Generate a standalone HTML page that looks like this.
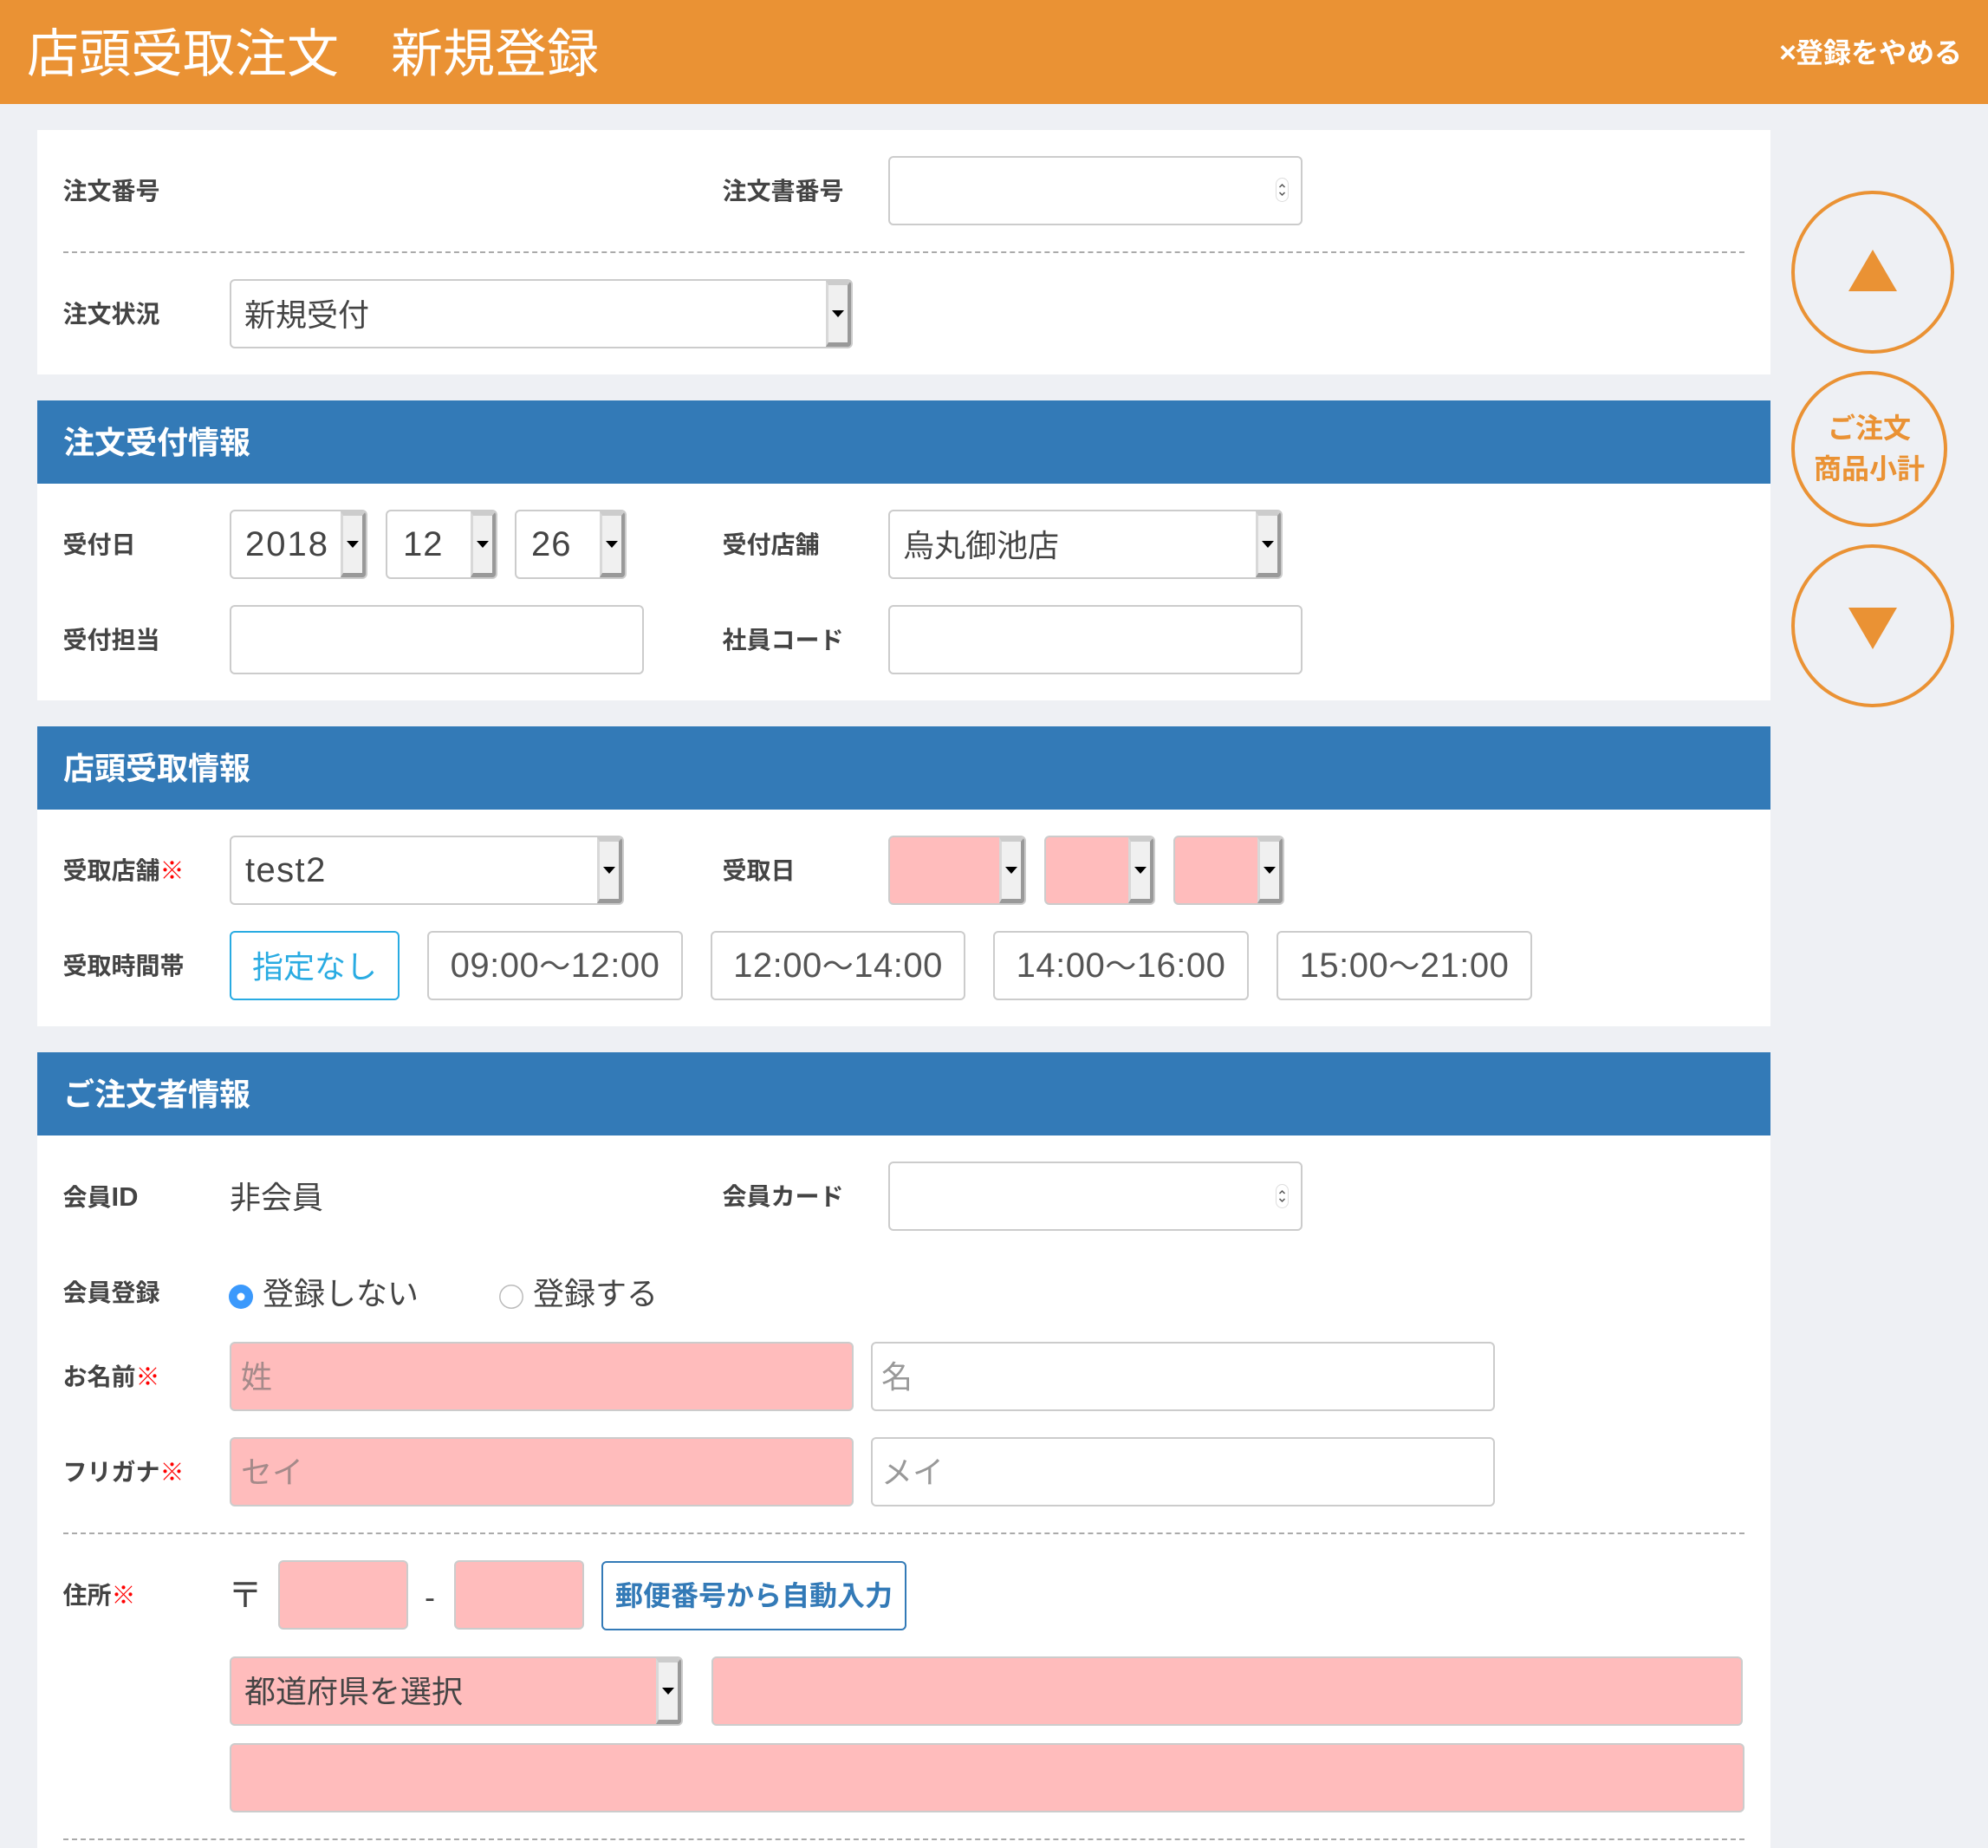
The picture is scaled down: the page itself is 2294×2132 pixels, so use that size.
<!DOCTYPE html>
<html lang="ja">
<head>
<meta charset="utf-8">
<title>店頭受取注文 新規登録</title>
<style>
*{box-sizing:border-box}
html,body{margin:0;padding:0}
body{width:2294px;height:2132px;position:relative;overflow:hidden;background:#eef0f4;color:#444;font-family:"Liberation Sans","Noto Sans CJK JP",sans-serif}
.a{position:absolute}
.head{left:0;top:0;width:2294px;height:120px;background:#ea9234}
.title{left:31px;top:-2px;height:120px;line-height:120px;font-size:60px;color:#fff;white-space:pre;font-family:"Noto Sans CJK JP",sans-serif;font-weight:400}
.quit{right:30px;top:1px;height:120px;line-height:120px;font-size:32px;font-weight:700;color:#fff;white-space:pre}
.quit span{font-size:34px;margin-right:-1px}
.panel{left:43px;width:2000px;background:#fff}
.sec{left:43px;width:2000px;height:96px;background:#337ab7;color:#fff;font-size:36px;font-weight:700;line-height:98px;padding-left:30px}
.l{height:80px;line-height:82px;font-size:28px;font-weight:700;color:#444;white-space:pre;margin-left:-.5px}
.l i{font-style:normal;color:#f00}
.box{height:80px;border:2px solid #ccc;border-radius:6px;background:#fff;font-size:36px;line-height:79px;color:#444;white-space:pre;overflow:hidden}
.pink{background:#ffbcbc}
.sel{padding-left:15px}
.sel b{position:absolute;right:0;top:0;bottom:0;width:29px;background:#f0f0f0;border-style:solid;border-width:5px 4px 5px 3px;border-color:#ccc #999 #999 #d8d8d8}
.sel b:after{content:"";position:absolute;left:50%;top:50%;margin:-4px 0 0 -7px;border-style:solid;border-width:8px 7px 0;border-color:#000 transparent transparent}
.ph{padding-left:11px;color:#999;line-height:78px}
.pink.ph{color:#a58a8a}
.num{font-size:40px;line-height:77px;letter-spacing:2px;padding-left:16px}
.btn{height:80px;border:2px solid #ccc;border-radius:6px;background:#fff;font-size:40px;line-height:77px;text-align:center;color:#555;white-space:pre;letter-spacing:.5px}
.btn span{font-size:36px}
.t{height:80px;line-height:83px;font-size:36px;color:#444;white-space:pre}
.hr{left:73px;width:1940px;height:0;border-top:2px dashed #aaa}
.c{border:4px solid #ea9234;border-radius:50%}
.sum{text-align:center;font-size:32px;font-weight:700;color:#ea9234;line-height:47px;white-space:pre}
</style>
</head>
<body>
<div class="a head"></div>
<div class="a title">店頭受取注文　新規登録</div>
<div class="a quit"><span>×</span>登録をやめる</div>

<!-- panels -->
<div class="a panel" style="top:150px;height:282px"></div>
<div class="a panel" style="top:462px;height:346px"></div>
<div class="a panel" style="top:838px;height:346px"></div>
<div class="a panel" style="top:1214px;height:918px"></div>
<div class="a sec" style="top:462px">注文受付情報</div>
<div class="a sec" style="top:838px">店頭受取情報</div>
<div class="a sec" style="top:1214px">ご注文者情報</div>

<!-- section 1 -->
<div class="a l" style="left:73px;top:180px">注文番号</div>
<div class="a l" style="left:834px;top:180px">注文書番号</div>
<div class="a box" style="left:1025px;top:180px;width:478px"></div>
<svg class="a" style="left:1472px;top:205px" width="15" height="28" viewBox="0 0 15 28"><rect x="0.5" y="0.5" width="14" height="27" rx="7" fill="#fff" stroke="#ddd"/><path d="M4.5 11 L7.5 8 L10.5 11 M4.5 17 L7.5 20 L10.5 17" fill="none" stroke="#555" stroke-width="1.5"/></svg>
<div class="a hr" style="top:290px"></div>
<div class="a l" style="left:73px;top:322px">注文状況</div>
<div class="a box sel" style="left:265px;top:322px;width:719px">新規受付<b></b></div>

<!-- section 2 -->
<div class="a l" style="left:73px;top:588px">受付日</div>
<div class="a box sel num" style="left:265px;top:588px;width:159px">2018<b></b></div>
<div class="a box sel num" style="left:445px;top:588px;width:129px;padding-left:18px;letter-spacing:1px">12<b></b></div>
<div class="a box sel num" style="left:594px;top:588px;width:129px;padding-left:17px;letter-spacing:1px">26<b></b></div>
<div class="a l" style="left:834px;top:588px">受付店舗</div>
<div class="a box sel" style="left:1025px;top:588px;width:455px">烏丸御池店<b></b></div>
<div class="a l" style="left:73px;top:698px">受付担当</div>
<div class="a box" style="left:265px;top:698px;width:478px"></div>
<div class="a l" style="left:834px;top:698px">社員コード</div>
<div class="a box" style="left:1025px;top:698px;width:478px"></div>

<!-- section 3 -->
<div class="a l" style="left:73px;top:964px">受取店舗<i>※</i></div>
<div class="a box sel num" style="left:265px;top:964px;width:455px;letter-spacing:1.4px">test2<b></b></div>
<div class="a l" style="left:834px;top:964px">受取日</div>
<div class="a box sel pink" style="left:1025px;top:964px;width:159px"><b></b></div>
<div class="a box sel pink" style="left:1205px;top:964px;width:128px"><b></b></div>
<div class="a box sel pink" style="left:1354px;top:964px;width:128px"><b></b></div>
<div class="a l" style="left:73px;top:1074px">受取時間帯</div>
<div class="a btn" style="left:265px;top:1074px;width:196px;border-color:#29abe2;color:#29abe2;font-size:36px;line-height:79px;letter-spacing:0">指定なし</div>
<div class="a btn" style="left:493px;top:1074px;width:295px">09:00<span>〜</span>12:00</div>
<div class="a btn" style="left:820px;top:1074px;width:294px">12:00<span>〜</span>14:00</div>
<div class="a btn" style="left:1146px;top:1074px;width:295px">14:00<span>〜</span>16:00</div>
<div class="a btn" style="left:1473px;top:1074px;width:295px">15:00<span>〜</span>21:00</div>

<!-- section 4 -->
<div class="a l" style="left:73px;top:1340px">会員<span style="font-size:31px">ID</span></div>
<div class="a t" style="left:265px;top:1340px">非会員</div>
<div class="a l" style="left:834px;top:1340px">会員カード</div>
<div class="a box" style="left:1025px;top:1340px;width:478px"></div>
<svg class="a" style="left:1472px;top:1366px" width="15" height="28" viewBox="0 0 15 28"><rect x="0.5" y="0.5" width="14" height="27" rx="7" fill="#fff" stroke="#ddd"/><path d="M4.5 11 L7.5 8 L10.5 11 M4.5 17 L7.5 20 L10.5 17" fill="none" stroke="#555" stroke-width="1.5"/></svg>

<div class="a l" style="left:73px;top:1451px">会員登録</div>
<svg class="a" style="left:263px;top:1481px" width="30" height="30" viewBox="0 0 30 30"><circle cx="15" cy="15" r="14" fill="#3b99fc"/><circle cx="15" cy="15" r="4.5" fill="#fff"/></svg>
<div class="a t" style="left:303px;top:1451px">登録しない</div>
<svg class="a" style="left:575px;top:1481px" width="30" height="30" viewBox="0 0 30 30"><circle cx="15" cy="15" r="13.2" fill="#fff" stroke="#bbb" stroke-width="1.5"/></svg>
<div class="a t" style="left:615px;top:1451px">登録する</div>

<div class="a l" style="left:73px;top:1548px">お名前<i>※</i></div>
<div class="a box pink ph" style="left:265px;top:1548px;width:720px">姓</div>
<div class="a box ph" style="left:1005px;top:1548px;width:720px;padding-left:10px">名</div>
<div class="a l" style="left:73px;top:1658px">フリガナ<i>※</i></div>
<div class="a box pink ph" style="left:265px;top:1658px;width:720px">セイ</div>
<div class="a box ph" style="left:1005px;top:1658px;width:720px;padding-left:10px">メイ</div>
<div class="a hr" style="top:1768px"></div>

<div class="a l" style="left:73px;top:1800px">住所<i>※</i></div>
<div class="a t" style="left:263px;top:1800px;font-size:40px">〒</div>
<div class="a box pink" style="left:321px;top:1800px;width:150px"></div>
<div class="a t" style="left:490px;top:1801px;font-size:36px">-</div>
<div class="a box pink" style="left:524px;top:1800px;width:150px"></div>
<div class="a" style="left:694px;top:1801px;width:352px;height:80px;border:2px solid #337ab7;border-radius:6px;background:#fff;color:#337ab7;font-size:32px;font-weight:700;line-height:77px;text-align:center;white-space:pre">郵便番号から自動入力</div>
<div class="a box sel pink" style="left:265px;top:1911px;width:523px;line-height:78px">都道府県を選択<b></b></div>
<div class="a box pink" style="left:821px;top:1911px;width:1190px"></div>
<div class="a box pink" style="left:265px;top:2011px;width:1748px"></div>
<div class="a hr" style="top:2121px"></div>

<!-- side buttons -->
<div class="a c" style="left:2067px;top:220px;width:188px;height:188px"></div>
<svg class="a" style="left:2133px;top:288px" width="56" height="48" viewBox="0 0 56 48"><path d="M28 0 L56 48 L0 48 Z" fill="#ea9234"/></svg>
<div class="a c" style="left:2067px;top:428px;width:180px;height:180px"></div>
<div class="a sum" style="left:2067px;top:471px;width:180px">ご注文
商品小計</div>
<div class="a c" style="left:2067px;top:628px;width:188px;height:188px"></div>
<svg class="a" style="left:2133px;top:701px" width="56" height="48" viewBox="0 0 56 48"><path d="M0 0 L56 0 L28 48 Z" fill="#ea9234"/></svg>
</body>
</html>
